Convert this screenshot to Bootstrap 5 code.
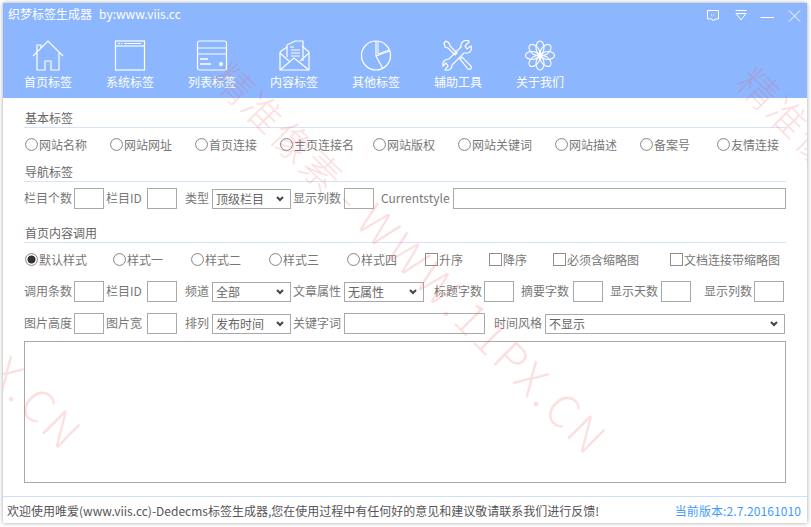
<!DOCTYPE html>
<html lang="zh">
<head>
<meta charset="utf-8">
<title>织梦标签生成器</title>
<link href="https://cdn.jsdelivr.net/npm/bootstrap@5.3.0/dist/css/bootstrap.min.css" rel="stylesheet">
<style>
html,body{height:100%;overflow:hidden;background:#fff;}
body{font:12px/18px "Noto Sans CJK SC","Noto Sans",sans-serif;color:#777;}
.app-win{margin:3px 4px 4px 3px;height:520px;position:relative;overflow:hidden;box-shadow:0 0 4px rgba(0,0,0,.38);background:#fff;display:flex;flex-direction:column;}
.app-head{background:#8cb6fe;height:95px;color:#fff;flex:none;}
.title-row{height:37px;padding:2px 5px 0 5px;align-items:flex-start;}
.title-main{line-height:18px;}
.title-by{margin-left:7px;}
.win-btns svg{display:block;}
.nav-strip{padding-left:4px;}
.nav-cell{width:82px;text-align:center;line-height:16px;}
.nav-cell svg{display:block;margin:0 auto 3px;}
.form-area{flex:1;padding:11px 21px 0;}
.sec-title{color:#666;line-height:18px;padding-left:1px;border-bottom:1px solid #d5e2fb;height:19px;}
.radio-row{display:grid;height:24px;align-items:center;padding-left:1px;margin-top:6px;}
.cols-a{grid-template-columns:85px 85px 85px 93px 85px 97px 85px 77px auto;}
.cols-b{grid-template-columns:88px 78px 78px 78px 78px 64px 64px 117px auto;}
.opt{display:flex;align-items:center;white-space:nowrap;margin-top:-2px;}
.opt input{appearance:none;width:13px;height:13px;margin:-1px 1px 0 0;border:1px solid #8d8d8d;background:#fff;flex:none;}
.opt input[type=radio]{border-radius:50%;box-shadow:inset 0 0 1px #bbb;}
.opt input[type=radio]:checked{background:radial-gradient(circle,#333 0 3.6px,#fff 4.4px);}
.opt input[type=checkbox]{border-radius:0;}
.field-row{display:grid;align-items:center;height:21px;}
.field-row>span{margin-top:-2px;}
.cols-c{grid-template-columns:50px 32px 41px 38px 27px 81px 51px 37px 72px 1fr;}
.cols-d{grid-template-columns:50px 32px 41px 38px 27px 81px 51px 90px 50px 37px 52px 37px 51px 43px 50px auto;}
.cols-e{grid-template-columns:50px 32px 41px 38px 27px 81px 51px 150px 51px 1fr;}
.tb{height:21px;border:1px solid #a9a9a9;background:transparent;border-radius:0;display:block;padding:0 3px;outline:0;}
.tb-s{width:30px;}
.tb-f{width:100%;}
.tb-k{width:141px;}
.dd{height:20px;border:1px solid #a9a9a9;border-radius:0;appearance:none;color:#666;font:inherit;line-height:18px;padding:0 0 0 3px;display:block;background:#fff url("data:image/svg+xml,%3Csvg xmlns='http://www.w3.org/2000/svg' width='8' height='6'%3E%3Cpath d='M1 1l3 3 3-3' fill='none' stroke='%23444' stroke-width='2'/%3E%3C/svg%3E") no-repeat right 6px center;}
.dd-a{width:79px;}
.dd-b{width:80px;}
.dd-f{width:240px;}
.sec-b{margin-top:5px;}
.sec-c{margin-top:15px;}
.rowgap-a{margin-top:6px;}
.rowgap-1{margin-top:8px;}
.rowgap-2{margin-top:11px;}
.big-box{display:block;width:100%;height:142px;border:1px solid #a9a9a9;background:transparent;margin-top:7px;resize:none;outline:0;border-radius:0;}
.status{height:27px;border-top:1px solid #cfdffb;line-height:27px;padding:0 6px 0 4px;color:#555;flex:none;}
.ver{color:#3f9cff;letter-spacing:.1px;}
.wm-text{position:absolute;left:219px;top:36px;white-space:nowrap;font-size:39px;line-height:54px;font-weight:300;color:rgba(238,90,90,.2);transform:rotate(45deg);transform-origin:0 50%;pointer-events:none;letter-spacing:2.5px;}
.wm-latin{font-size:44px;letter-spacing:4px;}
.wm-right{left:744px;top:41px;}
.wm-left{left:-306px;top:31px;}
</style>
</head>
<body>
<div class="app-win">
  <div class="app-head">
    <div class="title-row d-flex justify-content-between">
      <div class="title-main"><span>织梦标签生成器</span><span class="title-by">by:www.viis.cc</span></div>
      <div class="win-btns d-flex">
        <svg width="96" height="20" viewBox="0 0 96 20" fill="none" stroke="#fff" stroke-width="1"><path d="M1.500 5.500h11v8.500h-3.500l-1.500 2-1.500-2h-4.500z"/><path d="M5 10h4" stroke-dasharray="1 1"/><path d="M29.500 5.500h11M30 8.500h10l-5 6.500z"/><path d="M54.500 12.500h13.500"/><path d="M83 5.500l11 11M94 5.500l-11 11"/></svg>
      </div>
    </div>
    <div class="nav-strip d-flex">
      <div class="nav-cell"><svg width="32" height="31" viewBox="0 0 32 31" fill="none" stroke="#fff" stroke-width="1.200"><path d="M1 16L16 1l15 15"/><path d="M5 12.500V30h8v-9h6v9h8V12.500"/><path d="M5 12V5h4v3"/></svg>首页标签</div>
      <div class="nav-cell"><svg width="32" height="31" viewBox="0 0 32 31" fill="none" stroke="#fff" stroke-width="1.200"><rect x="1.500" y="1" width="29" height="29"/><path d="M1.500 6h29"/><path d="M4 3.500h2M7 3.500h1M10 3.500h17" stroke-width="1"/></svg>系统标签</div>
      <div class="nav-cell"><svg width="32" height="31" viewBox="0 0 32 31" fill="none" stroke="#fff" stroke-width="1.200"><rect x="1.500" y="1" width="29" height="29" rx="2"/><path d="M1.500 8h29M1.500 14h29"/><path d="M4 19h8M4 24h11" stroke-width="1.400"/><circle cx="25" cy="24" r="2" fill="#fff" stroke="none"/></svg>列表标签</div>
      <div class="nav-cell"><svg width="32" height="31" viewBox="0 0 32 31" fill="none" stroke="#fff" stroke-width="1.200"><path d="M2 12v18h29V12L24 6"/><path d="M2 12l7-5"/><path d="M9 17V5l8-4h8v20"/><path d="M2 30l14-12 15 12"/><path d="M2 13l9 8M31 13l-9 8"/><path d="M12 7h4M13 10h9M13 13h9M13 16h9" stroke-width="1"/></svg>内容标签</div>
      <div class="nav-cell"><svg width="32" height="31" viewBox="0 0 32 31" fill="none" stroke="#fff" stroke-width="1.200"><circle cx="16" cy="15.500" r="14.500"/><path d="M16 1v15l6.500 12M16 16L29.500 11"/><path d="M18 1.500V14l11-4" stroke-width="1"/></svg>其他标签</div>
      <div class="nav-cell"><svg width="32" height="31" viewBox="0 0 32 31" fill="none" stroke="#fff" stroke-width="1.200"><path d="M2 3l2-2 3 2 1 3 7 7-2 2-7-7-3-1z"/><path d="M18 19l2-2 9 9c1 2 0 4-3 3z"/><path d="M27 2l-4 4 2 3 4-3c1 3 0 6-3 7-2 0-3 0-4 0L10 25c0 4-3 6-7 5l3-4-2-3-3 3c-1-4 2-7 6-7l12-12c-1-4 3-8 8-6z"/></svg>辅助工具</div>
      <div class="nav-cell"><svg width="32" height="31" viewBox="0 0 32 31" fill="none" stroke="#fff" stroke-width="1.100"><ellipse cx="16" cy="7.500" rx="4" ry="6.500"/><ellipse cx="16" cy="7.500" rx="4" ry="6.500" transform="rotate(45 16 15.500)"/><ellipse cx="16" cy="7.500" rx="4" ry="6.500" transform="rotate(90 16 15.500)"/><ellipse cx="16" cy="7.500" rx="4" ry="6.500" transform="rotate(135 16 15.500)"/><ellipse cx="16" cy="7.500" rx="4" ry="6.500" transform="rotate(180 16 15.500)"/><ellipse cx="16" cy="7.500" rx="4" ry="6.500" transform="rotate(225 16 15.500)"/><ellipse cx="16" cy="7.500" rx="4" ry="6.500" transform="rotate(270 16 15.500)"/><ellipse cx="16" cy="7.500" rx="4" ry="6.500" transform="rotate(315 16 15.500)"/><circle cx="16" cy="15.500" r="1.500" fill="#fff" stroke="none"/></svg>关于我们</div>
    </div>
  </div>

  <div class="form-area">
    <div class="sec-title">基本标签</div>
    <div class="radio-row cols-a">
      <label class="opt"><input type="radio" name="b1">网站名称</label>
      <label class="opt"><input type="radio" name="b1">网站网址</label>
      <label class="opt"><input type="radio" name="b1">首页连接</label>
      <label class="opt"><input type="radio" name="b1">主页连接名</label>
      <label class="opt"><input type="radio" name="b1">网站版权</label>
      <label class="opt"><input type="radio" name="b1">网站关键词</label>
      <label class="opt"><input type="radio" name="b1">网站描述</label>
      <label class="opt"><input type="radio" name="b1">备案号</label>
      <label class="opt"><input type="radio" name="b1">友情连接</label>
    </div>

    <div class="sec-title sec-b">导航标签</div>
    <div class="field-row cols-c rowgap-a">
      <span>栏目个数</span><input class="tb tb-s" type="text">
      <span>栏目ID</span><input class="tb tb-s" type="text">
      <span>类型</span><select class="dd dd-a"><option>顶级栏目</option></select>
      <span>显示列数</span><input class="tb tb-s" type="text">
      <span>Currentstyle</span><input class="tb tb-f" type="text">
    </div>

    <div class="sec-title sec-c">首页内容调用</div>
    <div class="radio-row cols-b">
      <label class="opt"><input type="radio" name="b2" checked>默认样式</label>
      <label class="opt"><input type="radio" name="b2">样式一</label>
      <label class="opt"><input type="radio" name="b2">样式二</label>
      <label class="opt"><input type="radio" name="b2">样式三</label>
      <label class="opt"><input type="radio" name="b2">样式四</label>
      <label class="opt"><input type="checkbox">升序</label>
      <label class="opt"><input type="checkbox">降序</label>
      <label class="opt"><input type="checkbox">必须含缩略图</label>
      <label class="opt"><input type="checkbox">文档连接带缩略图</label>
    </div>

    <div class="field-row cols-d rowgap-1">
      <span>调用条数</span><input class="tb tb-s" type="text">
      <span>栏目ID</span><input class="tb tb-s" type="text">
      <span>频道</span><select class="dd dd-a"><option>全部</option></select>
      <span>文章属性</span><select class="dd dd-b"><option>无属性</option></select>
      <span>标题字数</span><input class="tb tb-s" type="text">
      <span>摘要字数</span><input class="tb tb-s" type="text">
      <span>显示天数</span><input class="tb tb-s" type="text">
      <span>显示列数</span><input class="tb tb-s" type="text">
    </div>

    <div class="field-row cols-e rowgap-2">
      <span>图片高度</span><input class="tb tb-s" type="text">
      <span>图片宽</span><input class="tb tb-s" type="text">
      <span>排列</span><select class="dd dd-a"><option>发布时间</option></select>
      <span>关键字词</span><input class="tb tb-k" type="text">
      <span>时间风格</span><select class="dd dd-f"><option>不显示</option></select>
    </div>

    <textarea class="big-box"></textarea>
  </div>

  <div class="status d-flex justify-content-between">
    <span>欢迎使用唯爱(www.viis.cc)-Dedecms标签生成器,您在使用过程中有任何好的意见和建议敬请联系我们进行反馈!</span>
    <span class="ver">当前版本:2.7.20161010</span>
  </div>

  <span class="wm-text">精准像素 - <span class="wm-latin">WWW.11PX.CN</span></span>
  <span class="wm-text wm-right">精准像素 - <span class="wm-latin">WWW.11PX.CN</span></span>
  <span class="wm-text wm-left">精准像素 - <span class="wm-latin">WWW.11PX.CN</span></span>
</div>
<script src="https://cdn.jsdelivr.net/npm/bootstrap@5.3.0/dist/js/bootstrap.bundle.min.js"></script>
</body>
</html>
